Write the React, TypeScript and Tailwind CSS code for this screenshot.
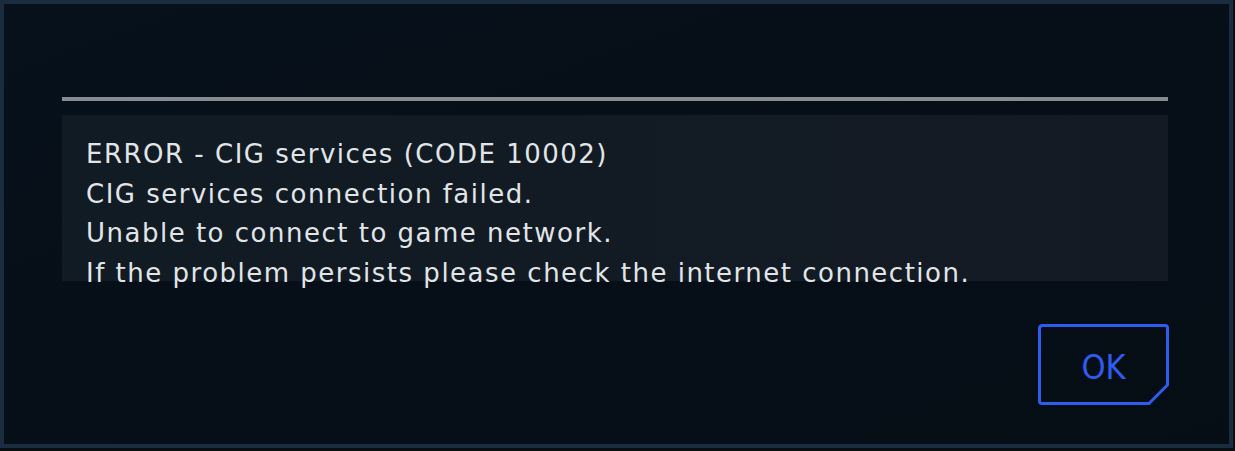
const lines = [
  "ERROR - CIG services (CODE 10002)",
  "CIG services connection failed.",
  "Unable to connect to game network.",
  "If the problem persists please check the internet connection.",
];

const OkButton = () => (
  <button className="relative w-[131px] h-[81px] flex items-center justify-center">
    <svg className="absolute inset-0" width="131" height="81" viewBox="0 0 131 81">
      <path
        d="M4.5 1.5 H127 Q129.5 1.5 129.5 4 V61 L111 79.5 H4 Q1.5 79.5 1.5 77 V4.5 Q1.5 1.5 4.5 1.5 Z"
        fill="none"
        stroke="#2e5cf0"
        strokeWidth="3"
      />
    </svg>
    <span className="relative mt-[4px] font-['DejaVu_Sans_Condensed','DejaVu_Sans',sans-serif] text-[34px] leading-none text-[#2f5cf0]">
      OK
    </span>
  </button>
);

export default function App() {
  return (
    <div className="w-[1235px] h-[451px] bg-[#0a0d11]">
      <div className="w-[1233px] h-[448px] border-4 border-[#1a2c40] bg-gradient-to-br from-[#07111b] to-[#050d15] pl-[58px] pr-[61px] pt-[93px]">
        <div className="h-[4px] bg-[#878c90]" />
        <div className="mt-[14px] h-[166px] bg-gradient-to-r from-[#111b24] via-[#121b24] to-[#141a24] pl-[24px] pt-[20px]">
          <div className="font-['DejaVu_Sans',sans-serif] text-[26px] tracking-[1.5px] leading-[39.5px] text-[#e2e5e8] whitespace-nowrap">
            {lines.map((l) => (
              <div key={l}>{l}</div>
            ))}
          </div>
        </div>
        <div className="mt-[43px] flex justify-end -mr-px">
          <OkButton />
        </div>
      </div>
    </div>
  );
}
